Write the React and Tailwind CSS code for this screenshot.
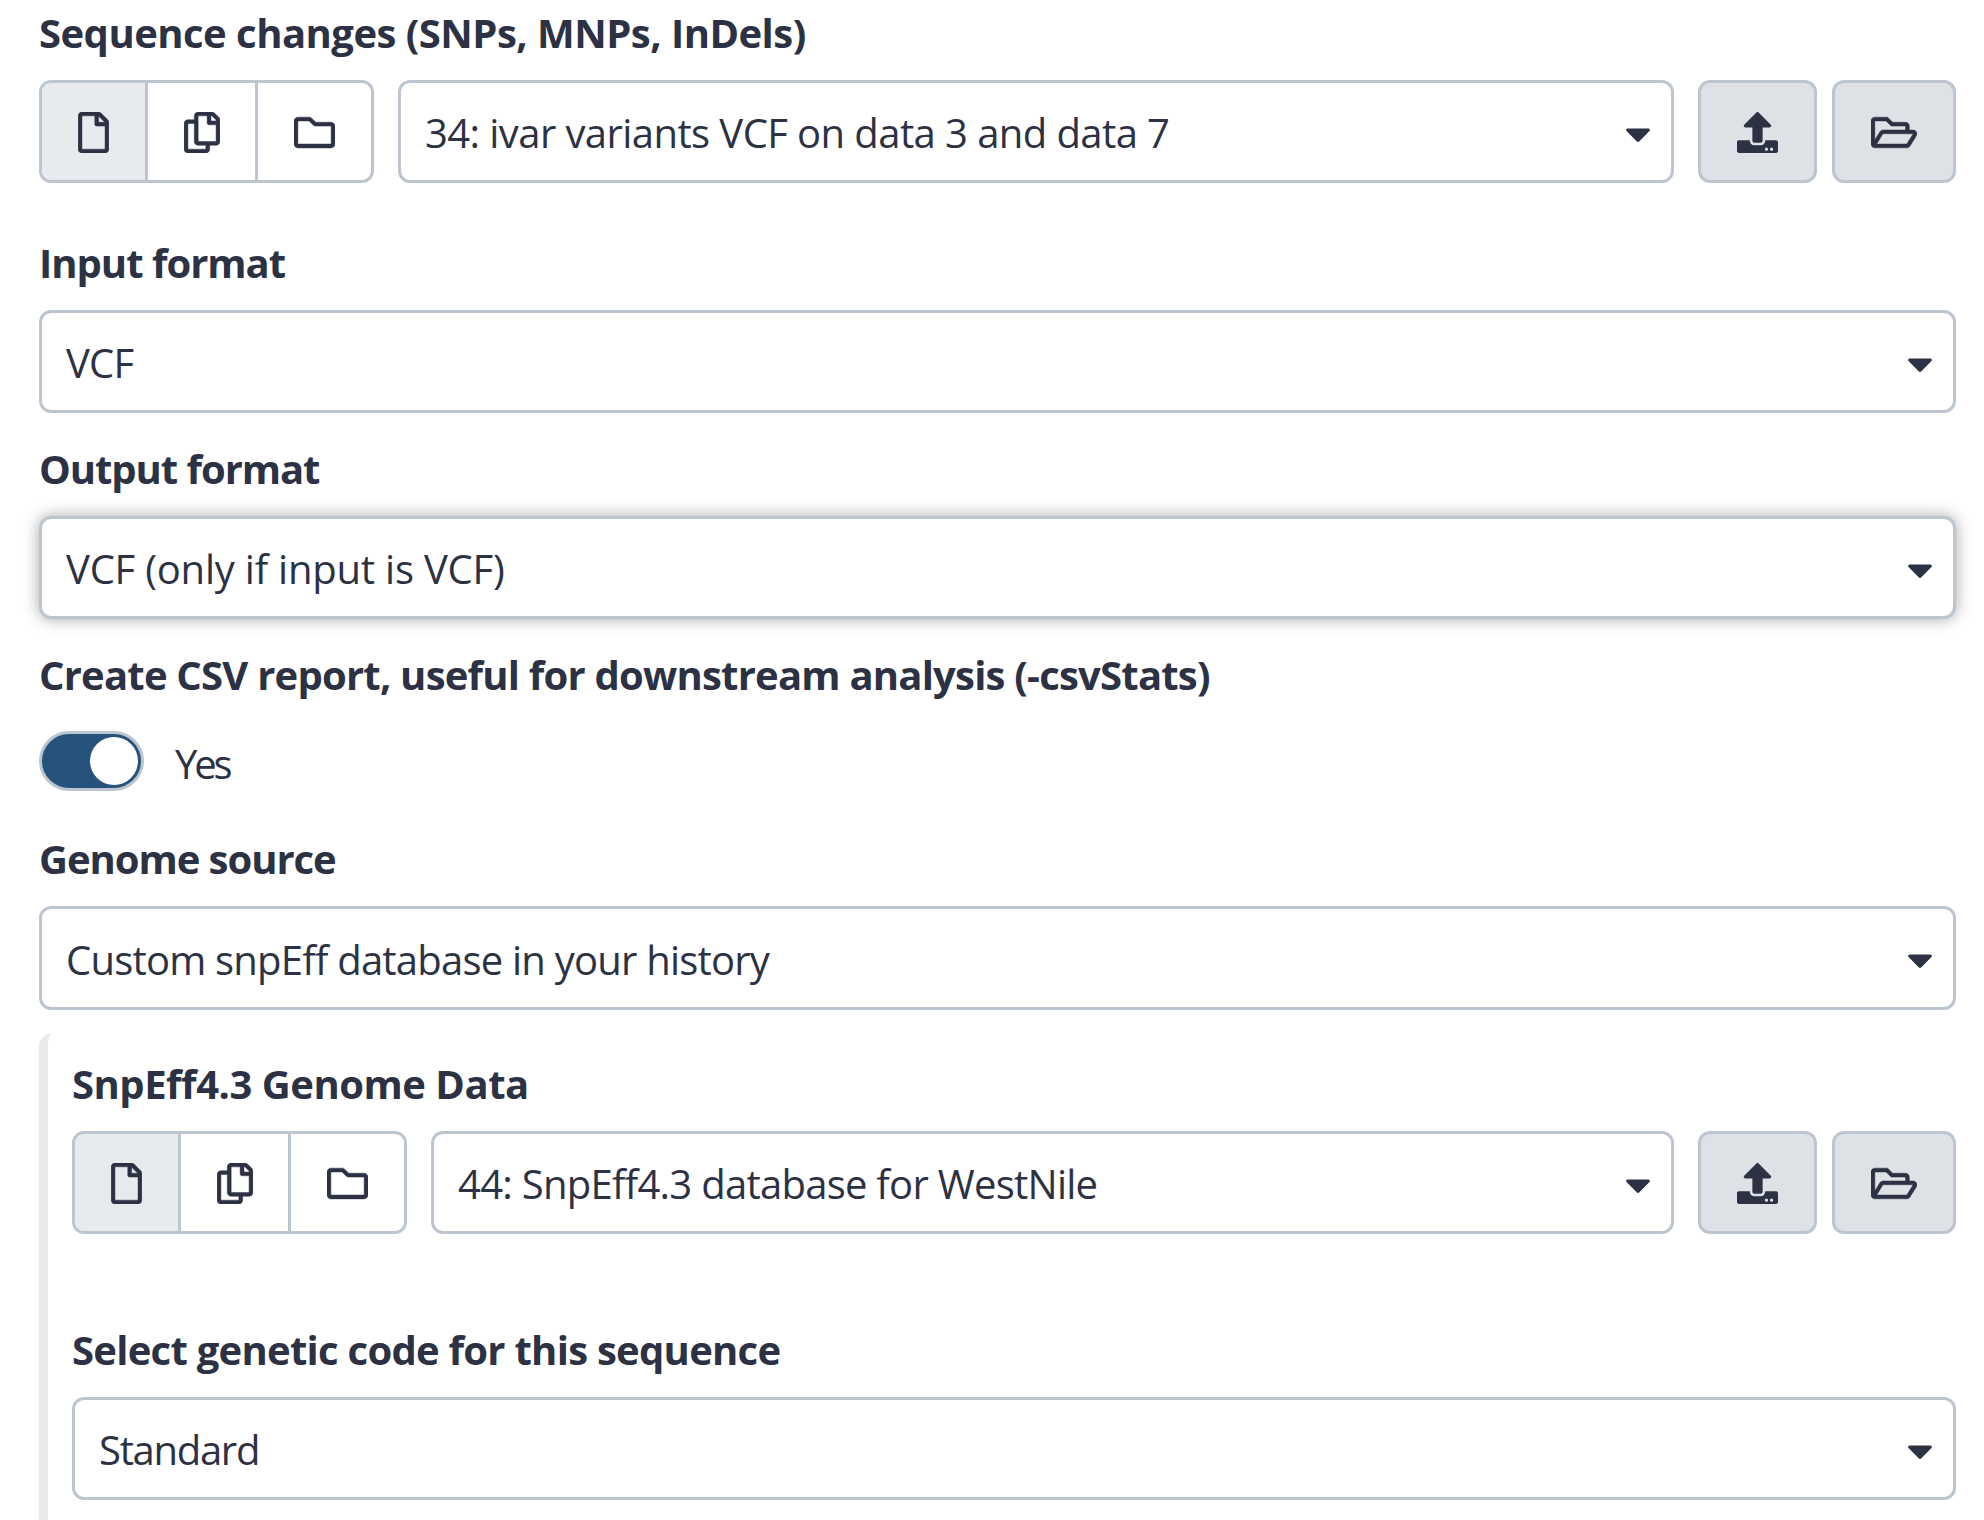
import {
  FaRegFile,
  FaRegCopy,
  FaRegFolder,
  FaRegFolderOpen,
  FaUpload,
  FaCaretDown,
} from 'react-icons/fa';

function Label({ className, children }) {
  return (
    <h2 className={`whitespace-nowrap text-[40px] font-bold leading-[61px] mb-[17px] ${className}`}>
      {children}
    </h2>
  );
}

function Select({ value, tracking, focused = false, className = 'h-[103px]' }) {
  return (
    <div
      className={`flex min-w-0 flex-1 items-center justify-between rounded-[12px] border-[3px] border-[#bdc6d0] bg-white pl-6 pr-5 ${className} ${
        focused ? 'shadow-[0_0_16px_rgba(0,0,0,0.35)]' : ''
      }`}
    >
      <span className={`whitespace-nowrap pt-[2px] text-[40px] leading-[61px] ${tracking}`}>{value}</span>
      <FaCaretDown className="mt-[3px] h-[41px] w-[26px] shrink-0" />
    </div>
  );
}

function DataField({ value, tracking }) {
  return (
    <div className="flex h-[103px]">
      <div className="mr-6 flex w-[335px] overflow-hidden rounded-[12px] border-[3px] border-[#bdc6d0]">
        <button className="flex w-[106px] items-center justify-center border-r-[3px] border-[#bdc6d0] bg-[#e8ebee]">
          <FaRegFile className="mt-[2px] h-[41px] w-[31px] stroke-[6]" />
        </button>
        <button className="flex w-[110px] items-center justify-center border-r-[3px] border-[#bdc6d0]">
          <FaRegCopy className="mt-[2px] h-[41px] w-[36px] stroke-[6]" />
        </button>
        <button className="flex flex-1 items-center justify-center">
          <FaRegFolder className="mt-[2px] h-[41px] w-[41px] stroke-[6]" />
        </button>
      </div>
      <Select value={value} tracking={tracking} />
      <button className="ml-6 flex w-[119px] items-center justify-center rounded-[12px] border-[3px] border-[#bdc6d0] bg-[#dee1e6]">
        <FaUpload className="mt-[2px] h-[41px] w-[41px]" />
      </button>
      <button className="ml-[15px] flex w-[124px] items-center justify-center rounded-[12px] border-[3px] border-[#bdc6d0] bg-[#dee1e6]">
        <FaRegFolderOpen className="mt-[2px] h-[41px] w-[46px] stroke-[6]" />
      </button>
    </div>
  );
}

export default function App() {
  return (
    <main className="flex h-[1520px] flex-col overflow-hidden bg-white pl-[39px] pr-7 pt-[2px] font-['Open_Sans','Noto_Sans',sans-serif] text-[#2c3143]">
      <section className="mb-[49px]">
        <Label className="tracking-[-0.52px]">Sequence changes (SNPs, MNPs, InDels)</Label>
        <DataField value="34: ivar variants VCF on data 3 and data 7" tracking="tracking-[-0.58px]" />
      </section>

      <section className="mb-[25px]">
        <Label className="tracking-[-1px]">Input format</Label>
        <Select value="VCF" tracking="tracking-[-0.8px]" />
      </section>

      <section className="mb-[25px]">
        <Label className="tracking-[-1.05px]">Output format</Label>
        <Select value="VCF (only if input is VCF)" tracking="tracking-[-0.22px]" focused />
      </section>

      <section className="mb-[37px]">
        <Label className="tracking-[-0.78px]">
          Create CSV report, useful for downstream analysis (-csvStats)
        </Label>
        <div className="mt-[26px] flex h-[60px] items-start">
          <button
            role="switch"
            aria-checked="true"
            aria-label="Create CSV report"
            className="flex h-[60px] w-[105px] items-center justify-end rounded-full border-[3px] border-[#bdc6d0] bg-[#25537b] pr-[3px]"
          >
            <span className="size-12 rounded-full bg-white" />
          </button>
          <span className="ml-[31px] mt-[2px] text-[40px] leading-[61px] tracking-[-3.2px]">Yes</span>
        </div>
      </section>

      <section className="mb-[23px]">
        <Label className="tracking-[-1.05px]">Genome source</Label>
        <Select
          value="Custom snpEff database in your history"
          tracking="tracking-[-0.78px]"
          className="h-[104px]"
        />
      </section>

      <section className="flex-1 rounded-l-[14px] rounded-bl-none border-l-[9px] border-[#e8ebee] pl-6 pt-5">
        <Label className="tracking-[-0.48px]">SnpEff4.3 Genome Data</Label>
        <DataField value="44: SnpEff4.3 database for WestNile" tracking="tracking-[-0.73px]" />
        <Label className="mt-[85px] tracking-[-0.73px]">Select genetic code for this sequence</Label>
        <Select value="Standard" tracking="tracking-[-1.3px]" />
      </section>
    </main>
  );
}
